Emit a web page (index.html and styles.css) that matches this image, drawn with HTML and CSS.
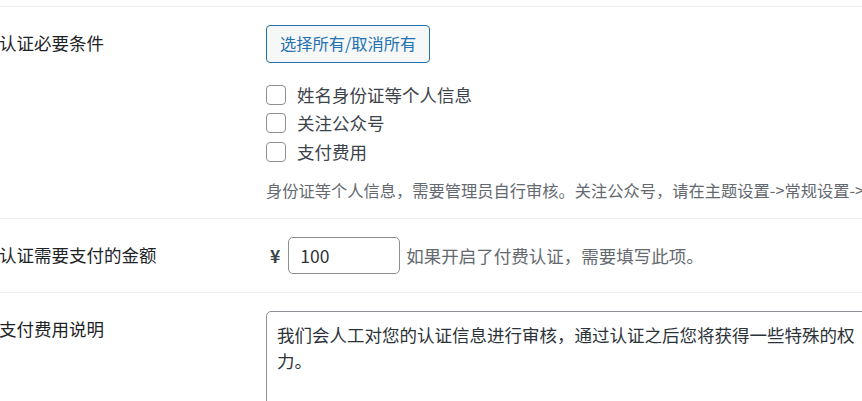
FILE: index.html
```html
<!DOCTYPE html>
<html lang="zh-CN">
<head>
<meta charset="utf-8">
<title>认证设置</title>
<link rel="stylesheet" href="styles.css">
</head>
<body>
<div class="page">
  <div class="form-table">
    <div class="row row-first">
      <div class="label">认证必要条件</div>
      <div class="field">
        <button class="button" type="button">选择所有/取消所有</button>
        <div class="checks">
          <label class="check"><input type="checkbox"><span>姓名身份证等个人信息</span></label>
          <label class="check"><input type="checkbox"><span>关注公众号</span></label>
          <label class="check"><input type="checkbox"><span>支付费用</span></label>
        </div>
        <p class="description">身份证等个人信息，需要管理员自行审核。关注公众号，请在主题设置-&gt;常规设置-&gt;公众号设置中进行配置。</p>
      </div>
    </div>
    <div class="row">
      <div class="label">认证需要支付的金额</div>
      <div class="field field-inline">
        <span class="currency">¥</span>
        <input class="small-text" type="text" value="100">
        <span class="inline-desc">如果开启了付费认证，需要填写此项。</span>
      </div>
    </div>
    <div class="row">
      <div class="label">支付费用说明</div>
      <div class="field">
        <textarea class="large-text" rows="5">我们会人工对您的认证信息进行审核，通过认证之后您将获得一些特殊的权力。</textarea>
      </div>
    </div>
  </div>
</div>
</body>
</html>
```
FILE: styles.css
```css
html, body {
  margin: 0;
  padding: 0;
  background: #ffffff;
}

body {
  font-family: "Noto Sans CJK SC", "Noto Sans", sans-serif;
  font-size: 17.5px;
  color: #3c434a;
  overflow: hidden;
}

.page {
  width: 862px;
  height: 401px;
  overflow: hidden;
  padding-top: 6px;
  box-sizing: border-box;
}

.form-table {
  display: flex;
  flex-direction: column;
}

.row {
  display: grid;
  grid-template-columns: 266px 1fr;
  border-top: 1px solid #ececec;
}

.label {
  padding-top: 24px;
  line-height: 24px;
  font-size: 17.5px;
  color: #1d2327;
  white-space: nowrap;
  margin-left: -1px;
}

.field {
  padding-top: 18px;
  padding-bottom: 18px;
  display: flex;
  flex-direction: column;
  align-items: flex-start;
  min-width: 0;
}

.row-first .field {
  padding-bottom: 16px;
}

.button {
  height: 37.5px;
  box-sizing: border-box;
  padding: 0 13px;
  margin: 0;
  border: 1px solid #2271b1;
  border-radius: 4px;
  background: #f6f7f7;
  color: #2271b1;
  font-family: inherit;
  font-size: 16.25px;
  line-height: 35px;
  cursor: pointer;
}

.checks {
  display: flex;
  flex-direction: column;
  margin-top: 18px;
}

.check {
  display: flex;
  align-items: center;
  height: 28.5px;
  line-height: 28.5px;
  color: #3c434a;
  white-space: nowrap;
}

.check input {
  appearance: none;
  -webkit-appearance: none;
  width: 20px;
  height: 20px;
  margin: 0 11px 0 0;
  border: 1px solid #8c8f94;
  border-radius: 4px;
  background: #ffffff;
  box-sizing: border-box;
}

.description {
  margin: 12px 0 0 0;
  font-size: 16.25px;
  line-height: 24px;
  color: #646970;
  white-space: nowrap;
}

.field-inline {
  flex-direction: row;
  align-items: center;
}

.currency {
  margin-left: 4px;
  font-size: 17.5px;
  font-weight: 700;
  color: #3c434a;
}

.small-text {
  width: 112px;
  height: 37px;
  box-sizing: border-box;
  margin: 0 6px 0 8px;
  padding: 0 11px;
  border: 1px solid #8c8f94;
  border-radius: 5px;
  font-family: inherit;
  font-size: 17.5px;
  color: #2c3338;
  background: #ffffff;
}

.inline-desc {
  font-size: 17.5px;
  color: #646970;
  white-space: nowrap;
}

.large-text {
  width: 607px;
  height: 140px;
  box-sizing: border-box;
  margin: 0;
  padding: 10px 10px;
  border: 1px solid #8c8f94;
  border-radius: 5px;
  font-family: inherit;
  font-size: 17.5px;
  line-height: 26px;
  color: #2c3338;
  background: #ffffff;
  resize: none;
  flex-shrink: 0;
}
```
